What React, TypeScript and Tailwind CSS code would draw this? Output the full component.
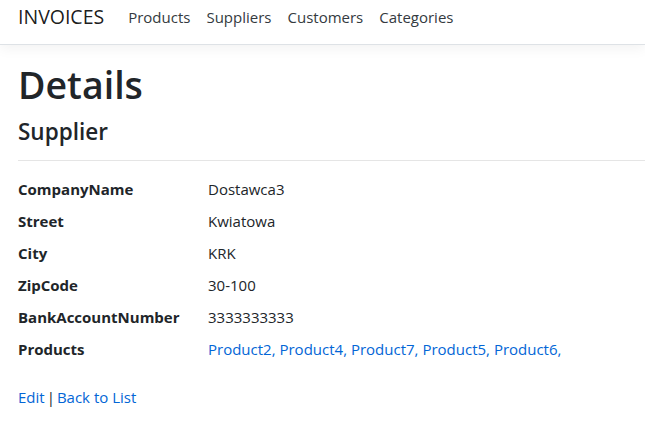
const links = ["Products", "Suppliers", "Customers", "Categories"];

const rows: [string, string][] = [
  ["CompanyName", "Dostawca3"],
  ["Street", "Kwiatowa"],
  ["City", "KRK"],
  ["ZipCode", "30-100"],
  ["BankAccountNumber", "3333333333"],
];

const products = ["Product2", "Product4", "Product7", "Product5", "Product6"];

export default function App() {
  return (
    <div className="min-h-screen bg-white text-[#212529] font-['Open_Sans','Noto_Sans',sans-serif] text-[15px] leading-6">
      {/* navbar */}
      <nav className="h-[45px] bg-white border-b border-[#dee2e6] shadow-[0_4px_12px_rgba(0,0,0,0.05)] flex items-start pl-[18px]">
        <a className="pt-[2px] text-[19.5px] leading-[30px] text-black/90 mr-[16px]">INVOICES</a>
        <ul className="flex mt-[5px]">
          {links.map((l) => (
            <li key={l}>
              <a className="px-2 text-[#343a40]">{l}</a>
            </li>
          ))}
        </ul>
      </nav>

      <main className="pl-[18px]">
        <h1 className="mt-[16px] mb-2 text-[37.5px] leading-[48px] font-semibold">Details</h1>
        <div>
          <h4 className="mb-2 text-[22.5px] leading-[29px] font-semibold">Supplier</h4>
          <hr className="mt-[14px] mb-4 border-t border-black/10" />
          <dl className="grid grid-cols-[190px_1fr]">
            {rows.map(([k, v]) => (
              <div key={k} className="contents">
                <dt className="font-bold mb-2">{k}</dt>
                <dd className="mb-2">{v}</dd>
              </div>
            ))}
            <dt className="font-bold mb-2">Products</dt>
            <dd className="mb-2 text-[#0366d6]">
              {products.map((p) => (
                <span key={p}>
                  <a className="text-[#0366d6]">{p}</a>,{" "}
                </span>
              ))}
            </dd>
          </dl>
        </div>
        <div className="mt-4">
          <a className="text-[#0366d6]">Edit</a>
          <span className="ml-[2px] mr-[2px]">|</span>
          <a className="text-[#0366d6]">Back to List</a>
        </div>
      </main>
    </div>
  );
}
